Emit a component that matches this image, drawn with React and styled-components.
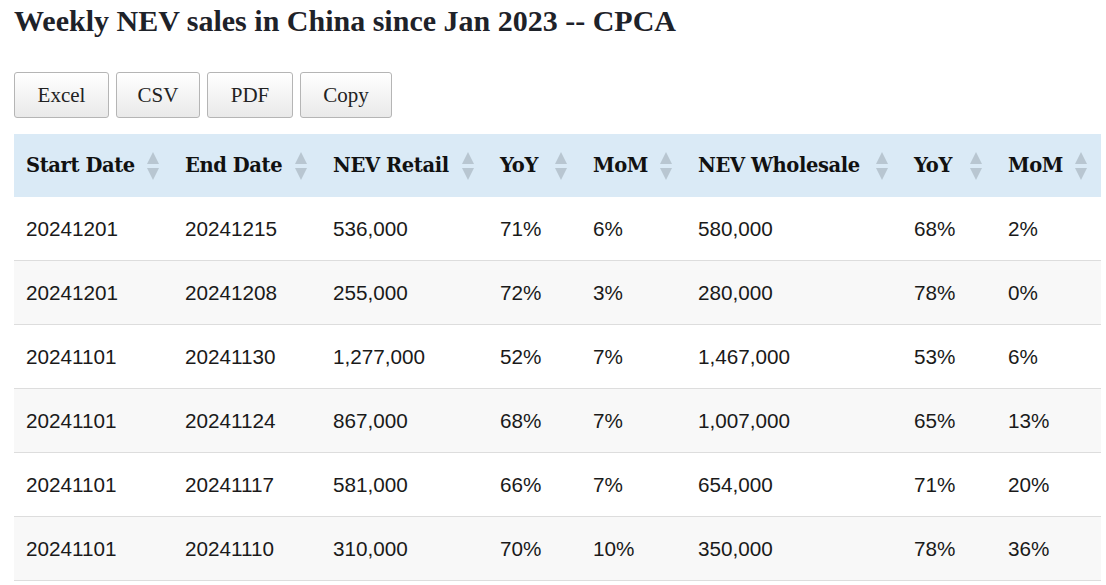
import React from "react";
import styled, { createGlobalStyle } from "styled-components";

const GlobalStyle = createGlobalStyle`
  body {
    margin: 0;
    background: #fff;
    color: #222;
  }
`;

const Page = styled.div`
  padding: 0 5px 0 14px;
`;

const Title = styled.h2`
  margin: 0;
  padding-top: 4px;
  font-family: "Liberation Serif", serif;
  font-weight: bold;
  font-size: 30px;
  line-height: 34px;
  color: #1e2229;
  white-space: nowrap;
`;

const Toolbar = styled.div`
  display: flex;
  gap: 7px;
  margin-top: 34px;
  margin-bottom: 16px;
`;

const Button = styled.button`
  height: 46px;
  width: ${(p) => p.w}px;
  padding: 0;
  border: 1px solid #b5b5b5;
  border-radius: 3px;
  background: linear-gradient(to bottom, #ffffff 0%, #e9e9e9 100%);
  font-family: "Liberation Serif", serif;
  font-size: 21px;
  color: #222;
`;

const Table = styled.table`
  border-collapse: collapse;
  width: 1087px;
  table-layout: fixed;
`;

const HeadRow = styled.tr`
  background: #daeaf6;
`;

const Th = styled.th`
  box-sizing: border-box;
  height: 63px;
  padding: 0 12px;
  text-align: left;
  font-family: "DejaVu Serif", serif;
  font-weight: bold;
  font-size: 19.5px;
  letter-spacing: -0.4px;
  color: #111;
  white-space: nowrap;
  position: relative;
  width: ${(p) => p.w}px;
`;

const Sort = styled.svg`
  position: absolute;
  right: 14px;
  top: 18px;
`;

const Row = styled.tr`
  background: ${(p) => (p.odd ? "#f8f8f8" : "#fff")};
  border-bottom: 1px solid #dddddd;
`;

const Td = styled.td`
  height: 63px;
  padding: 0 12px;
  font-family: "Liberation Sans", Arial, sans-serif;
  font-size: 20.7px;
  color: #1a1a1a;
  white-space: nowrap;
`;

const columns = [
  { label: "Start Date", w: 159 },
  { label: "End Date", w: 148 },
  { label: "NEV Retail", w: 167 },
  { label: "YoY", w: 93 },
  { label: "MoM", w: 105 },
  { label: "NEV Wholesale", w: 216 },
  { label: "YoY", w: 94 },
  { label: "MoM", w: 105 },
];

const rows = [
  ["20241201", "20241215", "536,000", "71%", "6%", "580,000", "68%", "2%"],
  ["20241201", "20241208", "255,000", "72%", "3%", "280,000", "78%", "0%"],
  ["20241101", "20241130", "1,277,000", "52%", "7%", "1,467,000", "53%", "6%"],
  ["20241101", "20241124", "867,000", "68%", "7%", "1,007,000", "65%", "13%"],
  ["20241101", "20241117", "581,000", "66%", "7%", "654,000", "71%", "20%"],
  ["20241101", "20241110", "310,000", "70%", "10%", "350,000", "78%", "36%"],
];

const SortIcon = () => (
  <Sort width="12" height="30" viewBox="0 0 12 30">
    <path d="M6 0 L12 12 L0 12 Z" fill="#b8c6d1" />
    <path d="M0 16 L12 16 L6 28 Z" fill="#b8c6d1" />
  </Sort>
);

export default function App() {
  return (
    <Page>
      <GlobalStyle />
      <Title>Weekly NEV sales in China since Jan 2023 -- CPCA</Title>
      <Toolbar>
        <Button w={95}>Excel</Button>
        <Button w={84}>CSV</Button>
        <Button w={86}>PDF</Button>
        <Button w={92}>Copy</Button>
      </Toolbar>
      <Table>
        <thead>
          <HeadRow>
            {columns.map((c, i) => (
              <Th key={i} w={c.w}>
                {c.label}
                <SortIcon />
              </Th>
            ))}
          </HeadRow>
        </thead>
        <tbody>
          {rows.map((r, i) => (
            <Row key={i} odd={i % 2 === 1}>
              {r.map((v, j) => (
                <Td key={j}>{v}</Td>
              ))}
            </Row>
          ))}
        </tbody>
      </Table>
    </Page>
  );
}
